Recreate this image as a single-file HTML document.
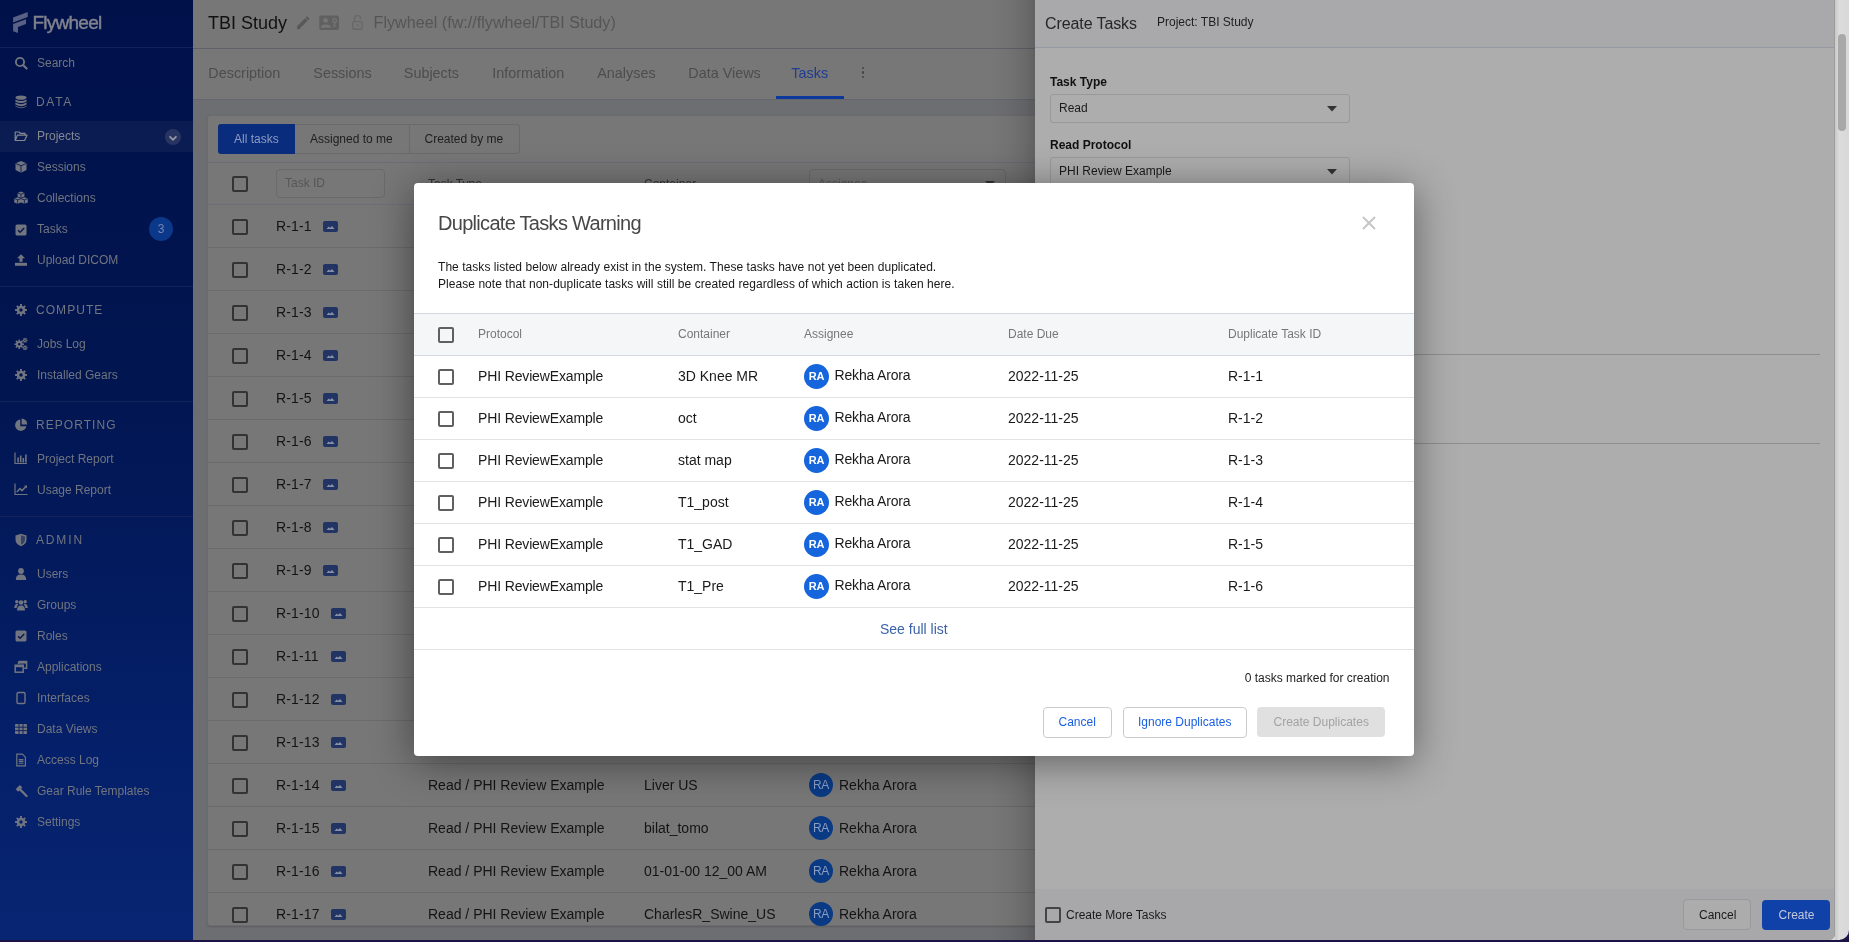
<!DOCTYPE html>
<html><head><meta charset="utf-8"><style>
*{box-sizing:border-box;margin:0;padding:0}
html,body{width:1849px;height:942px;overflow:hidden;background:#1b1346;font-family:"Liberation Sans",sans-serif}
.a{position:absolute}
.t{position:absolute;white-space:nowrap;line-height:1}
body>div{will-change:transform}
</style></head><body>
<div class="a" style="left:0;top:0;width:193px;height:940px;background:linear-gradient(180deg,#00114a 0%,#011550 40%,#05206a 80%,#072572 100%)">
<div class="t" style="left:32.5px;top:13.02px;font-size:19px;color:#81838e;font-weight:400;letter-spacing:-0.75px;-webkit-text-stroke:0.45px #81838e">Flywheel</div>
<svg class="a" style="left:0;top:0" width="40" height="40"><path d="M13.1 17.6L27.7 12.1V17.1L13.1 22.6Z M13.1 24L26 19.3V24L18 27V33L13.1 31.3Z" fill="#586083"/></svg>
<div class="a" style="left:0;top:47px;width:193px;height:1px;background:#12225a"></div>
<div class="a" style="left:0;top:121px;width:193px;height:31px;background:#0b1c52"></div>
<div class="t" style="left:37px;top:56.84px;font-size:12px;color:#71757f;font-weight:400;">Search</div>
<div class="t" style="left:37px;top:129.84px;font-size:12px;color:#858892;font-weight:400;">Projects</div>
<div class="t" style="left:37px;top:160.84px;font-size:12px;color:#71757f;font-weight:400;">Sessions</div>
<div class="t" style="left:37px;top:191.84px;font-size:12px;color:#71757f;font-weight:400;">Collections</div>
<div class="t" style="left:37px;top:222.84px;font-size:12px;color:#71757f;font-weight:400;">Tasks</div>
<div class="t" style="left:37px;top:253.84px;font-size:12px;color:#71757f;font-weight:400;">Upload DICOM</div>
<div class="t" style="left:37px;top:337.84px;font-size:12px;color:#71757f;font-weight:400;">Jobs Log</div>
<div class="t" style="left:37px;top:368.84px;font-size:12px;color:#71757f;font-weight:400;">Installed Gears</div>
<div class="t" style="left:37px;top:452.84px;font-size:12px;color:#71757f;font-weight:400;">Project Report</div>
<div class="t" style="left:37px;top:483.84px;font-size:12px;color:#71757f;font-weight:400;">Usage Report</div>
<div class="t" style="left:37px;top:567.84px;font-size:12px;color:#71757f;font-weight:400;">Users</div>
<div class="t" style="left:37px;top:598.84px;font-size:12px;color:#71757f;font-weight:400;">Groups</div>
<div class="t" style="left:37px;top:629.84px;font-size:12px;color:#71757f;font-weight:400;">Roles</div>
<div class="t" style="left:37px;top:660.84px;font-size:12px;color:#71757f;font-weight:400;">Applications</div>
<div class="t" style="left:37px;top:691.84px;font-size:12px;color:#71757f;font-weight:400;">Interfaces</div>
<div class="t" style="left:37px;top:722.84px;font-size:12px;color:#71757f;font-weight:400;">Data Views</div>
<div class="t" style="left:37px;top:753.84px;font-size:12px;color:#71757f;font-weight:400;">Access Log</div>
<div class="t" style="left:37px;top:784.84px;font-size:12px;color:#71757f;font-weight:400;">Gear Rule Templates</div>
<div class="t" style="left:37px;top:815.84px;font-size:12px;color:#71757f;font-weight:400;">Settings</div>
<div class="t" style="left:36px;top:95.84px;font-size:12px;color:#71757f;font-weight:400;letter-spacing:1.7px">DATA</div>
<div class="t" style="left:36px;top:303.84px;font-size:12px;color:#71757f;font-weight:400;letter-spacing:1.05px">COMPUTE</div>
<div class="t" style="left:36px;top:418.84px;font-size:12px;color:#71757f;font-weight:400;letter-spacing:1.05px">REPORTING</div>
<div class="t" style="left:36px;top:533.84px;font-size:12px;color:#71757f;font-weight:400;letter-spacing:1.85px">ADMIN</div>
<div class="a" style="left:0;top:286px;width:193px;height:1px;background:#12225a"></div>
<div class="a" style="left:0;top:401px;width:193px;height:1px;background:#12225a"></div>
<div class="a" style="left:0;top:516px;width:193px;height:1px;background:#12225a"></div>
<svg class="a" style="left:13.5px;top:55.5px;color:#71757f;" width="14" height="14" viewBox="0 0 14 14"><circle cx="6" cy="6" r="4.1" fill="none" stroke="currentColor" stroke-width="1.9"/><path d="M9 9L12.6 12.6" stroke="currentColor" stroke-width="2.1" stroke-linecap="round"/></svg>
<svg class="a" style="left:13.5px;top:94.5px;color:#71757f;" width="14" height="14" viewBox="0 0 14 14"><ellipse cx="7" cy="2.6" rx="5.6" ry="2.2" fill="currentColor"/><path d="M1.4 4.4Q7 7.6 12.6 4.4V6.4Q7 9.6 1.4 6.4Z M1.4 7.6Q7 10.8 12.6 7.6V9.6Q7 12.8 1.4 9.6Z M1.4 10.8Q7 14 12.6 10.8V11.6Q7 14.8 1.4 11.6Z" fill="currentColor"/></svg>
<svg class="a" style="left:13.5px;top:128.5px;color:#858892;" width="14" height="14" viewBox="0 0 14 14"><path d="M1.2 11.5V3H5L6.3 4.4H11V6.2 M1.2 11.5H10.6L13 6.2H3.4L1.2 11.5Z" fill="none" stroke="currentColor" stroke-width="1.2" stroke-linejoin="round"/></svg>
<svg class="a" style="left:13.5px;top:160px;color:#71757f;" width="14" height="14" viewBox="0 0 14 14"><path d="M7 1L12.5 3.2V10L7 12.8L1.5 10V3.2Z" fill="currentColor"/><path d="M1.5 3.4L7 5.8L12.5 3.4M7 5.8V12.8" fill="none" stroke="#0a1a4e" stroke-width="0.9"/></svg>
<svg class="a" style="left:13.5px;top:190.5px;color:#71757f;" width="14" height="14" viewBox="0 0 14 14"><g fill="currentColor"><path d="M7 0.6L10.4 1.9V5.6L7 7L3.6 5.6V1.9Z"/><path d="M3.6 6.2L7 7.5V11.4L3.6 12.8L0.2 11.4V7.5Z"/><path d="M10.4 6.2L13.8 7.5V11.4L10.4 12.8L7 11.4V7.5Z"/></g><path d="M3.6 2L7 3.3L10.4 2M7 3.3V7M0.2 7.6L3.6 8.9L7 7.6M3.6 8.9V12.8M7 7.6L10.4 8.9L13.8 7.6M10.4 8.9V12.8" fill="none" stroke="#0a1a4e" stroke-width="0.8"/></svg>
<svg class="a" style="left:13.5px;top:222.5px;color:#71757f;" width="14" height="14" viewBox="0 0 14 14"><rect x="1.5" y="1.5" width="11" height="11" rx="1.6" fill="currentColor"/><path d="M4 7.2L6.1 9.2L10.2 5" fill="none" stroke="#0a1a4e" stroke-width="1.5"/></svg>
<svg class="a" style="left:13.5px;top:252.5px;color:#71757f;" width="14" height="14" viewBox="0 0 14 14"><path d="M7 1.2L11 5.2H8.6V8.8H5.4V5.2H3Z" fill="currentColor"/><rect x="1" y="9.8" width="12" height="3" fill="currentColor"/></svg>
<svg class="a" style="left:13.5px;top:302.5px;color:#71757f;" width="14" height="14" viewBox="0 0 14 14"><path d="M11.20 6.08L12.92 6.03L12.92 7.97L11.20 7.92L10.62 9.32L11.87 10.50L10.50 11.87L9.32 10.62L7.92 11.20L7.97 12.92L6.03 12.92L6.08 11.20L4.68 10.62L3.50 11.87L2.13 10.50L3.38 9.32L2.80 7.92L1.08 7.97L1.08 6.03L2.80 6.08L3.38 4.68L2.13 3.50L3.50 2.13L4.68 3.38L6.08 2.80L6.03 1.08L7.97 1.08L7.92 2.80L9.32 3.38L10.50 2.13L11.87 3.50L10.62 4.68ZM8.70 7.00A1.7 1.7 0 1 0 5.30 7.00A1.7 1.7 0 1 0 8.70 7.00Z" fill="currentColor" fill-rule="evenodd"/></svg>
<svg class="a" style="left:13.5px;top:336.5px;color:#71757f;" width="14" height="14" viewBox="0 0 14 14"><path d="M8.52 6.47L9.94 6.43L9.94 7.97L8.52 7.93L8.06 9.03L9.10 10.00L8.00 11.10L7.03 10.06L5.93 10.52L5.97 11.94L4.43 11.94L4.47 10.52L3.37 10.06L2.40 11.10L1.30 10.00L2.34 9.03L1.88 7.93L0.46 7.97L0.46 6.43L1.88 6.47L2.34 5.37L1.30 4.40L2.40 3.30L3.37 4.34L4.47 3.88L4.43 2.46L5.97 2.46L5.93 3.88L7.03 4.34L8.00 3.30L9.10 4.40L8.06 5.37ZM6.50 7.20A1.3 1.3 0 1 0 3.90 7.20A1.3 1.3 0 1 0 6.50 7.20Z" fill="currentColor" fill-rule="evenodd"/><path d="M12.71 2.74L13.53 2.69L13.53 3.91L12.71 3.86L12.34 4.50L12.79 5.19L11.74 5.79L11.37 5.06L10.63 5.06L10.26 5.79L9.21 5.19L9.66 4.50L9.29 3.86L8.47 3.91L8.47 2.69L9.29 2.74L9.66 2.10L9.21 1.41L10.26 0.81L10.63 1.54L11.37 1.54L11.74 0.81L12.79 1.41L12.34 2.10ZM11.70 3.30A0.7 0.7 0 1 0 10.30 3.30A0.7 0.7 0 1 0 11.70 3.30Z" fill="currentColor" fill-rule="evenodd"/><path d="M12.71 10.24L13.53 10.19L13.53 11.41L12.71 11.36L12.34 12.00L12.79 12.69L11.74 13.29L11.37 12.56L10.63 12.56L10.26 13.29L9.21 12.69L9.66 12.00L9.29 11.36L8.47 11.41L8.47 10.19L9.29 10.24L9.66 9.60L9.21 8.91L10.26 8.31L10.63 9.04L11.37 9.04L11.74 8.31L12.79 8.91L12.34 9.60ZM11.70 10.80A0.7 0.7 0 1 0 10.30 10.80A0.7 0.7 0 1 0 11.70 10.80Z" fill="currentColor" fill-rule="evenodd"/></svg>
<svg class="a" style="left:13.5px;top:367.5px;color:#71757f;" width="14" height="14" viewBox="0 0 14 14"><path d="M11.20 6.08L12.92 6.03L12.92 7.97L11.20 7.92L10.62 9.32L11.87 10.50L10.50 11.87L9.32 10.62L7.92 11.20L7.97 12.92L6.03 12.92L6.08 11.20L4.68 10.62L3.50 11.87L2.13 10.50L3.38 9.32L2.80 7.92L1.08 7.97L1.08 6.03L2.80 6.08L3.38 4.68L2.13 3.50L3.50 2.13L4.68 3.38L6.08 2.80L6.03 1.08L7.97 1.08L7.92 2.80L9.32 3.38L10.50 2.13L11.87 3.50L10.62 4.68ZM8.70 7.00A1.7 1.7 0 1 0 5.30 7.00A1.7 1.7 0 1 0 8.70 7.00Z" fill="currentColor" fill-rule="evenodd"/></svg>
<svg class="a" style="left:13.5px;top:417.5px;color:#71757f;" width="14" height="14" viewBox="0 0 14 14"><path d="M6.3 1.5A5.7 5.7 0 1 0 12.4 8.2H6.3Z" fill="currentColor"/><path d="M7.6 0.6A5.7 5.7 0 0 1 13.2 6.4H7.6Z" fill="currentColor"/></svg>
<svg class="a" style="left:13.5px;top:451px;color:#71757f;" width="14" height="14" viewBox="0 0 14 14"><path d="M1 1.5V12.5H13" fill="none" stroke="currentColor" stroke-width="1.2"/><path d="M3.3 6.5h1.6v5h-1.6z M5.9 4.5h1.6v7h-1.6z M8.5 7h1.6v4.5h-1.6z M11.1 3.5h1.6v8h-1.6z" fill="currentColor"/></svg>
<svg class="a" style="left:13.5px;top:482px;color:#71757f;" width="14" height="14" viewBox="0 0 14 14"><path d="M1 1.5V12.5H13.5" fill="none" stroke="currentColor" stroke-width="1.2"/><path d="M2.8 10L6 6.6L8 8.6L12 4.4" fill="none" stroke="currentColor" stroke-width="1.5"/><path d="M10 3.6H13V6.6Z" fill="currentColor"/></svg>
<svg class="a" style="left:13.5px;top:532.5px;color:#71757f;" width="14" height="14" viewBox="0 0 14 14"><path d="M7 0.8L12.5 2.6V6.5Q12.5 11 7 13.2Q1.5 11 1.5 6.5V2.6Z" fill="currentColor"/><path d="M7 2.3L11 3.6V6.6Q11 10 7 11.7Z" fill="#0a1a4e" opacity=".55"/></svg>
<svg class="a" style="left:13.5px;top:566.5px;color:#71757f;" width="14" height="14" viewBox="0 0 14 14"><circle cx="7" cy="4" r="2.9" fill="currentColor"/><path d="M1.8 13Q1.8 7.6 7 7.6Q12.2 7.6 12.2 13Z" fill="currentColor"/></svg>
<svg class="a" style="left:13.5px;top:597.5px;color:#71757f;" width="14" height="14" viewBox="0 0 14 14"><g fill="currentColor"><circle cx="7" cy="4.5" r="2.3"/><circle cx="2.8" cy="3.8" r="1.7"/><circle cx="11.2" cy="3.8" r="1.7"/><path d="M3 12.5Q3 7.4 7 7.4Q11 7.4 11 12.5Z"/><path d="M0.3 10Q0.3 6 3.2 6Q4.3 6 4.4 6.6Q2.8 7.8 2.6 10Z"/><path d="M13.7 10Q13.7 6 10.8 6Q9.7 6 9.6 6.6Q11.2 7.8 11.4 10Z"/></g></svg>
<svg class="a" style="left:13.5px;top:628.5px;color:#71757f;" width="14" height="14" viewBox="0 0 14 14"><rect x="1.5" y="1.5" width="11" height="11" rx="1.6" fill="currentColor"/><path d="M4 7.2L6.1 9.2L10.2 5" fill="none" stroke="#0a1a4e" stroke-width="1.5"/></svg>
<svg class="a" style="left:13.5px;top:659.5px;color:#71757f;" width="14" height="14" viewBox="0 0 14 14"><path d="M4.6 1.6H12.6V8.2H10.2 M4.6 4V1.6" fill="none" stroke="currentColor" stroke-width="1.5"/><rect x="1.2" y="5.2" width="8" height="7" fill="none" stroke="currentColor" stroke-width="1.5"/><rect x="1.2" y="5.2" width="8" height="2" fill="currentColor"/><rect x="4.6" y="1.6" width="8" height="2" fill="currentColor"/></svg>
<svg class="a" style="left:13.5px;top:690.5px;color:#71757f;" width="14" height="14" viewBox="0 0 14 14"><rect x="3" y="1.5" width="8" height="11" rx="1.3" fill="none" stroke="currentColor" stroke-width="1.4"/></svg>
<svg class="a" style="left:13.5px;top:721.5px;color:#71757f;" width="14" height="14" viewBox="0 0 14 14"><rect x="1" y="2" width="12" height="10" rx="1" fill="currentColor"/><path d="M1 5.2H13M1 8.6H13M5 2V12M9 2V12" stroke="#0a1f60" stroke-width="0.9"/></svg>
<svg class="a" style="left:13.5px;top:752.5px;color:#71757f;" width="14" height="14" viewBox="0 0 14 14"><path d="M2.8 1.2H8.4L11.4 4.2V12.8H2.8Z" fill="none" stroke="currentColor" stroke-width="1.2"/><path d="M4.8 6.6H9.4M4.8 8.4H9.4M4.8 10.2H9.4" stroke="currentColor" stroke-width="1.1"/></svg>
<svg class="a" style="left:13.5px;top:783.5px;color:#71757f;" width="14" height="14" viewBox="0 0 14 14"><path d="M1.6 5.2L5.8 1L8.4 3.6L4.2 7.8Z" fill="currentColor"/><path d="M6.2 5.6L12.6 12" stroke="currentColor" stroke-width="2.2" stroke-linecap="round"/></svg>
<svg class="a" style="left:13.5px;top:814.5px;color:#71757f;" width="14" height="14" viewBox="0 0 14 14"><path d="M11.20 6.08L12.92 6.03L12.92 7.97L11.20 7.92L10.62 9.32L11.87 10.50L10.50 11.87L9.32 10.62L7.92 11.20L7.97 12.92L6.03 12.92L6.08 11.20L4.68 10.62L3.50 11.87L2.13 10.50L3.38 9.32L2.80 7.92L1.08 7.97L1.08 6.03L2.80 6.08L3.38 4.68L2.13 3.50L3.50 2.13L4.68 3.38L6.08 2.80L6.03 1.08L7.97 1.08L7.92 2.80L9.32 3.38L10.50 2.13L11.87 3.50L10.62 4.68ZM8.70 7.00A1.7 1.7 0 1 0 5.30 7.00A1.7 1.7 0 1 0 8.70 7.00Z" fill="currentColor" fill-rule="evenodd"/></svg>
<div class="a" style="left:165px;top:129px;width:16px;height:16px;border-radius:50%;background:#283461"></div>
<svg class="a" style="left:166px;top:130.5px;color:#989aa3;" width="14" height="14" viewBox="0 0 14 14"><path d="M3.6 5.4L7 8.8L10.4 5.4" fill="none" stroke="currentColor" stroke-width="1.8"/></svg>
<div class="a" style="left:149px;top:217px;width:24px;height:24px;border-radius:50%;background:#0b388a;color:#7385b3;font-size:12px;line-height:24px;text-align:center">3</div>
</div>
<div class="a" style="left:193px;top:0;width:842px;height:940px;background:#6d6e71;overflow:hidden">
<div class="a" style="left:0;top:0;width:842px;height:100px;background:#777777"></div>
<div class="a" style="left:0;top:48px;width:842px;height:1px;background:#5f6269"></div>
<div class="a" style="left:0;top:99px;width:842px;height:1px;background:#63666d"></div>
<div class="t" style="left:15px;top:13.96px;font-size:18px;color:#111;font-weight:400;">TBI Study</div>
<div class="t" style="left:180.60000000000002px;top:14.33px;font-size:16.15px;color:#555;font-weight:400;">Flywheel (fw://flywheel/TBI Study)</div>
<svg class="a" style="left:97px;top:10px" width="80" height="26" viewBox="290 10 80 26"><path d="M298.2 27.6L306.4 19.4" stroke="#595959" stroke-width="3.6"/><path d="M306.9 18.9L308.3 17.5" stroke="#595959" stroke-width="3.6"/><path d="M297 29.2L297.3 25.6L300.6 28.9Z" fill="#595959"/><rect x="319.3" y="15.6" width="19.7" height="14.5" rx="2" fill="#606060"/><circle cx="325.6" cy="20.4" r="2.4" fill="#757575"/><path d="M320.8 27.8Q321 24.6 325.8 24.6Q330.8 24.6 331 27.8Z" fill="#757575"/><circle cx="334.7" cy="20.6" r="1.9" fill="none" stroke="#757575" stroke-width="1.3"/><path d="M334.7 22.4V27.2M334.7 25H333.4M334.7 26.6H333.6" stroke="#757575" stroke-width="1.2"/><rect x="352.8" y="21.6" width="9.4" height="7.6" rx="1.2" fill="none" stroke="#686868" stroke-width="1.4"/><path d="M354.6 21V18.4Q354.6 15.6 357.6 15.6Q360.6 15.6 360.6 18.4V19.4" fill="none" stroke="#686868" stroke-width="1.4"/><circle cx="357.5" cy="25.2" r="1" fill="#686868"/></svg>
<div class="a" style="left:668.8px;top:66.9px;width:2.6px;height:2.6px;border-radius:50%;background:#444"></div>
<div class="a" style="left:668.8px;top:71.2px;width:2.6px;height:2.6px;border-radius:50%;background:#444"></div>
<div class="a" style="left:668.8px;top:75.5px;width:2.6px;height:2.6px;border-radius:50%;background:#444"></div>
<div class="t" style="left:15.300000000000011px;top:65.81px;font-size:14.4px;color:#4d4d4d;font-weight:400;">Description</div>
<div class="t" style="left:120.30000000000001px;top:65.81px;font-size:14.4px;color:#4d4d4d;font-weight:400;">Sessions</div>
<div class="t" style="left:210.8px;top:65.81px;font-size:14.4px;color:#4d4d4d;font-weight:400;">Subjects</div>
<div class="t" style="left:299.2px;top:65.81px;font-size:14.4px;color:#4d4d4d;font-weight:400;">Information</div>
<div class="t" style="left:404.20000000000005px;top:65.81px;font-size:14.4px;color:#4d4d4d;font-weight:400;">Analyses</div>
<div class="t" style="left:495.29999999999995px;top:65.81px;font-size:14.4px;color:#4d4d4d;font-weight:400;">Data Views</div>
<div class="t" style="left:598.3px;top:65.81px;font-size:14.4px;color:#1f3d92;font-weight:400;">Tasks</div>
<div class="a" style="left:583px;top:96px;width:68px;height:3px;background:#0c389b"></div>
<div class="a" style="left:14px;top:115px;width:900px;height:811px;background:#777;border:1px solid #6c6c6c;border-radius:3px;box-shadow:0 1px 2px rgba(0,0,0,.15);overflow:hidden"></div>
<div class="a" style="left:25px;top:124px;width:302px;height:30px;border:1px solid #6a6a6a;border-radius:3px;background:#777"></div>
<div class="a" style="left:25px;top:124px;width:77px;height:30px;border-radius:3px 0 0 3px;background:#0a2c7c"></div>
<div class="a" style="left:216px;top:124px;width:1px;height:30px;background:#6a6a6a"></div>
<div class="t" style="left:41px;top:133.04px;font-size:12px;color:#8c9cc3;font-weight:400;">All tasks</div>
<div class="t" style="left:117px;top:133.04px;font-size:12px;color:#1e1e1e;font-weight:400;">Assigned to me</div>
<div class="t" style="left:231.5px;top:133.04px;font-size:12px;color:#1e1e1e;font-weight:400;">Created by me</div>
<div class="a" style="left:15px;top:162px;width:900px;height:1px;background:#6b6e78"></div>
<div class="a" style="left:83px;top:169px;width:109px;height:29px;border:1px solid #6a6a6a;border-radius:4px"></div>
<div class="t" style="left:92px;top:177.34px;font-size:12px;color:#575757;font-weight:400;">Task ID</div>
<div class="t" style="left:235px;top:177.84px;font-size:12px;color:#333;font-weight:400;">Task Type</div>
<div class="t" style="left:451px;top:177.84px;font-size:12px;color:#333;font-weight:400;">Container</div>
<div class="a" style="left:616px;top:169px;width:197px;height:29px;border:1px solid #6a6a6a;border-radius:4px"></div>
<div class="t" style="left:625px;top:177.84px;font-size:12px;color:#555;font-weight:400;">Assignee</div>
<svg class="a" style="left:792px;top:181px" width="10" height="6"><path d="M0 0H10L5 5Z" fill="#333"/></svg>
<div class="a" style="left:39px;top:176px;width:16px;height:16px;border:2px solid #333;border-radius:2px"></div>
<div class="a" style="left:15px;top:204px;width:900px;height:1px;background:#6b6e78"></div>
<div class="a" style="left:0;top:0;width:842px;height:926px;overflow:hidden">
<div class="a" style="left:15px;top:247px;width:900px;height:1px;background:#6b6b6b"></div>
<div class="a" style="left:39px;top:219px;width:16px;height:16px;border:2px solid #333;border-radius:2px"></div>
<div class="t" style="left:83px;top:219.15px;font-size:14px;color:#141414;font-weight:400;letter-spacing:0.15px">R-1-1</div>
<svg class="a" style="left:129.5px;top:220.5px" width="15" height="11"><rect width="15" height="11" rx="2" fill="#223463"/><path d="M3.5 8L5.8 5.6L7.2 6.8L9 5L11.5 8Z" fill="#8791a6"/></svg>
<div class="t" style="left:235px;top:219.15px;font-size:14px;color:#141414;font-weight:400;">Read / PHI Review Example</div>
<div class="t" style="left:451px;top:219.15px;font-size:14px;color:#141414;font-weight:400;">3D Knee MR</div>
<div class="a" style="left:616px;top:214px;width:24px;height:24px;border-radius:50%;background:#0a3a84;color:#8a9cc0;font-size:12px;font-weight:400;line-height:24px;text-align:center;letter-spacing:-0.3px">RA</div>
<div class="t" style="left:646px;top:219.15px;font-size:14px;color:#141414;font-weight:400;">Rekha Arora</div>
<div class="a" style="left:15px;top:290px;width:900px;height:1px;background:#6b6b6b"></div>
<div class="a" style="left:39px;top:262px;width:16px;height:16px;border:2px solid #333;border-radius:2px"></div>
<div class="t" style="left:83px;top:262.15px;font-size:14px;color:#141414;font-weight:400;letter-spacing:0.15px">R-1-2</div>
<svg class="a" style="left:129.5px;top:263.5px" width="15" height="11"><rect width="15" height="11" rx="2" fill="#223463"/><path d="M3.5 8L5.8 5.6L7.2 6.8L9 5L11.5 8Z" fill="#8791a6"/></svg>
<div class="t" style="left:235px;top:262.15px;font-size:14px;color:#141414;font-weight:400;">Read / PHI Review Example</div>
<div class="t" style="left:451px;top:262.15px;font-size:14px;color:#141414;font-weight:400;">oct</div>
<div class="a" style="left:616px;top:257px;width:24px;height:24px;border-radius:50%;background:#0a3a84;color:#8a9cc0;font-size:12px;font-weight:400;line-height:24px;text-align:center;letter-spacing:-0.3px">RA</div>
<div class="t" style="left:646px;top:262.15px;font-size:14px;color:#141414;font-weight:400;">Rekha Arora</div>
<div class="a" style="left:15px;top:333px;width:900px;height:1px;background:#6b6b6b"></div>
<div class="a" style="left:39px;top:305px;width:16px;height:16px;border:2px solid #333;border-radius:2px"></div>
<div class="t" style="left:83px;top:305.15px;font-size:14px;color:#141414;font-weight:400;letter-spacing:0.15px">R-1-3</div>
<svg class="a" style="left:129.5px;top:306.5px" width="15" height="11"><rect width="15" height="11" rx="2" fill="#223463"/><path d="M3.5 8L5.8 5.6L7.2 6.8L9 5L11.5 8Z" fill="#8791a6"/></svg>
<div class="t" style="left:235px;top:305.15px;font-size:14px;color:#141414;font-weight:400;">Read / PHI Review Example</div>
<div class="t" style="left:451px;top:305.15px;font-size:14px;color:#141414;font-weight:400;">stat map</div>
<div class="a" style="left:616px;top:300px;width:24px;height:24px;border-radius:50%;background:#0a3a84;color:#8a9cc0;font-size:12px;font-weight:400;line-height:24px;text-align:center;letter-spacing:-0.3px">RA</div>
<div class="t" style="left:646px;top:305.15px;font-size:14px;color:#141414;font-weight:400;">Rekha Arora</div>
<div class="a" style="left:15px;top:376px;width:900px;height:1px;background:#6b6b6b"></div>
<div class="a" style="left:39px;top:348px;width:16px;height:16px;border:2px solid #333;border-radius:2px"></div>
<div class="t" style="left:83px;top:348.15px;font-size:14px;color:#141414;font-weight:400;letter-spacing:0.15px">R-1-4</div>
<svg class="a" style="left:129.5px;top:349.5px" width="15" height="11"><rect width="15" height="11" rx="2" fill="#223463"/><path d="M3.5 8L5.8 5.6L7.2 6.8L9 5L11.5 8Z" fill="#8791a6"/></svg>
<div class="t" style="left:235px;top:348.15px;font-size:14px;color:#141414;font-weight:400;">Read / PHI Review Example</div>
<div class="t" style="left:451px;top:348.15px;font-size:14px;color:#141414;font-weight:400;">T1_post</div>
<div class="a" style="left:616px;top:343px;width:24px;height:24px;border-radius:50%;background:#0a3a84;color:#8a9cc0;font-size:12px;font-weight:400;line-height:24px;text-align:center;letter-spacing:-0.3px">RA</div>
<div class="t" style="left:646px;top:348.15px;font-size:14px;color:#141414;font-weight:400;">Rekha Arora</div>
<div class="a" style="left:15px;top:419px;width:900px;height:1px;background:#6b6b6b"></div>
<div class="a" style="left:39px;top:391px;width:16px;height:16px;border:2px solid #333;border-radius:2px"></div>
<div class="t" style="left:83px;top:391.15px;font-size:14px;color:#141414;font-weight:400;letter-spacing:0.15px">R-1-5</div>
<svg class="a" style="left:129.5px;top:392.5px" width="15" height="11"><rect width="15" height="11" rx="2" fill="#223463"/><path d="M3.5 8L5.8 5.6L7.2 6.8L9 5L11.5 8Z" fill="#8791a6"/></svg>
<div class="t" style="left:235px;top:391.15px;font-size:14px;color:#141414;font-weight:400;">Read / PHI Review Example</div>
<div class="t" style="left:451px;top:391.15px;font-size:14px;color:#141414;font-weight:400;">T1_GAD</div>
<div class="a" style="left:616px;top:386px;width:24px;height:24px;border-radius:50%;background:#0a3a84;color:#8a9cc0;font-size:12px;font-weight:400;line-height:24px;text-align:center;letter-spacing:-0.3px">RA</div>
<div class="t" style="left:646px;top:391.15px;font-size:14px;color:#141414;font-weight:400;">Rekha Arora</div>
<div class="a" style="left:15px;top:462px;width:900px;height:1px;background:#6b6b6b"></div>
<div class="a" style="left:39px;top:434px;width:16px;height:16px;border:2px solid #333;border-radius:2px"></div>
<div class="t" style="left:83px;top:434.15px;font-size:14px;color:#141414;font-weight:400;letter-spacing:0.15px">R-1-6</div>
<svg class="a" style="left:129.5px;top:435.5px" width="15" height="11"><rect width="15" height="11" rx="2" fill="#223463"/><path d="M3.5 8L5.8 5.6L7.2 6.8L9 5L11.5 8Z" fill="#8791a6"/></svg>
<div class="t" style="left:235px;top:434.15px;font-size:14px;color:#141414;font-weight:400;">Read / PHI Review Example</div>
<div class="t" style="left:451px;top:434.15px;font-size:14px;color:#141414;font-weight:400;">T1_Pre</div>
<div class="a" style="left:616px;top:429px;width:24px;height:24px;border-radius:50%;background:#0a3a84;color:#8a9cc0;font-size:12px;font-weight:400;line-height:24px;text-align:center;letter-spacing:-0.3px">RA</div>
<div class="t" style="left:646px;top:434.15px;font-size:14px;color:#141414;font-weight:400;">Rekha Arora</div>
<div class="a" style="left:15px;top:505px;width:900px;height:1px;background:#6b6b6b"></div>
<div class="a" style="left:39px;top:477px;width:16px;height:16px;border:2px solid #333;border-radius:2px"></div>
<div class="t" style="left:83px;top:477.15px;font-size:14px;color:#141414;font-weight:400;letter-spacing:0.15px">R-1-7</div>
<svg class="a" style="left:129.5px;top:478.5px" width="15" height="11"><rect width="15" height="11" rx="2" fill="#223463"/><path d="M3.5 8L5.8 5.6L7.2 6.8L9 5L11.5 8Z" fill="#8791a6"/></svg>
<div class="t" style="left:235px;top:477.15px;font-size:14px;color:#141414;font-weight:400;">Read / PHI Review Example</div>
<div class="t" style="left:451px;top:477.15px;font-size:14px;color:#141414;font-weight:400;">x</div>
<div class="a" style="left:616px;top:472px;width:24px;height:24px;border-radius:50%;background:#0a3a84;color:#8a9cc0;font-size:12px;font-weight:400;line-height:24px;text-align:center;letter-spacing:-0.3px">RA</div>
<div class="t" style="left:646px;top:477.15px;font-size:14px;color:#141414;font-weight:400;">Rekha Arora</div>
<div class="a" style="left:15px;top:548px;width:900px;height:1px;background:#6b6b6b"></div>
<div class="a" style="left:39px;top:520px;width:16px;height:16px;border:2px solid #333;border-radius:2px"></div>
<div class="t" style="left:83px;top:520.15px;font-size:14px;color:#141414;font-weight:400;letter-spacing:0.15px">R-1-8</div>
<svg class="a" style="left:129.5px;top:521.5px" width="15" height="11"><rect width="15" height="11" rx="2" fill="#223463"/><path d="M3.5 8L5.8 5.6L7.2 6.8L9 5L11.5 8Z" fill="#8791a6"/></svg>
<div class="t" style="left:235px;top:520.15px;font-size:14px;color:#141414;font-weight:400;">Read / PHI Review Example</div>
<div class="t" style="left:451px;top:520.15px;font-size:14px;color:#141414;font-weight:400;">x</div>
<div class="a" style="left:616px;top:515px;width:24px;height:24px;border-radius:50%;background:#0a3a84;color:#8a9cc0;font-size:12px;font-weight:400;line-height:24px;text-align:center;letter-spacing:-0.3px">RA</div>
<div class="t" style="left:646px;top:520.15px;font-size:14px;color:#141414;font-weight:400;">Rekha Arora</div>
<div class="a" style="left:15px;top:591px;width:900px;height:1px;background:#6b6b6b"></div>
<div class="a" style="left:39px;top:563px;width:16px;height:16px;border:2px solid #333;border-radius:2px"></div>
<div class="t" style="left:83px;top:563.15px;font-size:14px;color:#141414;font-weight:400;letter-spacing:0.15px">R-1-9</div>
<svg class="a" style="left:129.5px;top:564.5px" width="15" height="11"><rect width="15" height="11" rx="2" fill="#223463"/><path d="M3.5 8L5.8 5.6L7.2 6.8L9 5L11.5 8Z" fill="#8791a6"/></svg>
<div class="t" style="left:235px;top:563.15px;font-size:14px;color:#141414;font-weight:400;">Read / PHI Review Example</div>
<div class="t" style="left:451px;top:563.15px;font-size:14px;color:#141414;font-weight:400;">x</div>
<div class="a" style="left:616px;top:558px;width:24px;height:24px;border-radius:50%;background:#0a3a84;color:#8a9cc0;font-size:12px;font-weight:400;line-height:24px;text-align:center;letter-spacing:-0.3px">RA</div>
<div class="t" style="left:646px;top:563.15px;font-size:14px;color:#141414;font-weight:400;">Rekha Arora</div>
<div class="a" style="left:15px;top:634px;width:900px;height:1px;background:#6b6b6b"></div>
<div class="a" style="left:39px;top:606px;width:16px;height:16px;border:2px solid #333;border-radius:2px"></div>
<div class="t" style="left:83px;top:606.15px;font-size:14px;color:#141414;font-weight:400;letter-spacing:0.15px">R-1-10</div>
<svg class="a" style="left:137.8px;top:607.5px" width="15" height="11"><rect width="15" height="11" rx="2" fill="#223463"/><path d="M3.5 8L5.8 5.6L7.2 6.8L9 5L11.5 8Z" fill="#8791a6"/></svg>
<div class="t" style="left:235px;top:606.15px;font-size:14px;color:#141414;font-weight:400;">Read / PHI Review Example</div>
<div class="t" style="left:451px;top:606.15px;font-size:14px;color:#141414;font-weight:400;">x</div>
<div class="a" style="left:616px;top:601px;width:24px;height:24px;border-radius:50%;background:#0a3a84;color:#8a9cc0;font-size:12px;font-weight:400;line-height:24px;text-align:center;letter-spacing:-0.3px">RA</div>
<div class="t" style="left:646px;top:606.15px;font-size:14px;color:#141414;font-weight:400;">Rekha Arora</div>
<div class="a" style="left:15px;top:677px;width:900px;height:1px;background:#6b6b6b"></div>
<div class="a" style="left:39px;top:649px;width:16px;height:16px;border:2px solid #333;border-radius:2px"></div>
<div class="t" style="left:83px;top:649.15px;font-size:14px;color:#141414;font-weight:400;letter-spacing:0.15px">R-1-11</div>
<svg class="a" style="left:137.8px;top:650.5px" width="15" height="11"><rect width="15" height="11" rx="2" fill="#223463"/><path d="M3.5 8L5.8 5.6L7.2 6.8L9 5L11.5 8Z" fill="#8791a6"/></svg>
<div class="t" style="left:235px;top:649.15px;font-size:14px;color:#141414;font-weight:400;">Read / PHI Review Example</div>
<div class="t" style="left:451px;top:649.15px;font-size:14px;color:#141414;font-weight:400;">x</div>
<div class="a" style="left:616px;top:644px;width:24px;height:24px;border-radius:50%;background:#0a3a84;color:#8a9cc0;font-size:12px;font-weight:400;line-height:24px;text-align:center;letter-spacing:-0.3px">RA</div>
<div class="t" style="left:646px;top:649.15px;font-size:14px;color:#141414;font-weight:400;">Rekha Arora</div>
<div class="a" style="left:15px;top:720px;width:900px;height:1px;background:#6b6b6b"></div>
<div class="a" style="left:39px;top:692px;width:16px;height:16px;border:2px solid #333;border-radius:2px"></div>
<div class="t" style="left:83px;top:692.15px;font-size:14px;color:#141414;font-weight:400;letter-spacing:0.15px">R-1-12</div>
<svg class="a" style="left:137.8px;top:693.5px" width="15" height="11"><rect width="15" height="11" rx="2" fill="#223463"/><path d="M3.5 8L5.8 5.6L7.2 6.8L9 5L11.5 8Z" fill="#8791a6"/></svg>
<div class="t" style="left:235px;top:692.15px;font-size:14px;color:#141414;font-weight:400;">Read / PHI Review Example</div>
<div class="t" style="left:451px;top:692.15px;font-size:14px;color:#141414;font-weight:400;">x</div>
<div class="a" style="left:616px;top:687px;width:24px;height:24px;border-radius:50%;background:#0a3a84;color:#8a9cc0;font-size:12px;font-weight:400;line-height:24px;text-align:center;letter-spacing:-0.3px">RA</div>
<div class="t" style="left:646px;top:692.15px;font-size:14px;color:#141414;font-weight:400;">Rekha Arora</div>
<div class="a" style="left:15px;top:763px;width:900px;height:1px;background:#6b6b6b"></div>
<div class="a" style="left:39px;top:735px;width:16px;height:16px;border:2px solid #333;border-radius:2px"></div>
<div class="t" style="left:83px;top:735.15px;font-size:14px;color:#141414;font-weight:400;letter-spacing:0.15px">R-1-13</div>
<svg class="a" style="left:137.8px;top:736.5px" width="15" height="11"><rect width="15" height="11" rx="2" fill="#223463"/><path d="M3.5 8L5.8 5.6L7.2 6.8L9 5L11.5 8Z" fill="#8791a6"/></svg>
<div class="t" style="left:235px;top:735.15px;font-size:14px;color:#141414;font-weight:400;">Read / PHI Review Example</div>
<div class="t" style="left:451px;top:735.15px;font-size:14px;color:#141414;font-weight:400;">x</div>
<div class="a" style="left:616px;top:730px;width:24px;height:24px;border-radius:50%;background:#0a3a84;color:#8a9cc0;font-size:12px;font-weight:400;line-height:24px;text-align:center;letter-spacing:-0.3px">RA</div>
<div class="t" style="left:646px;top:735.15px;font-size:14px;color:#141414;font-weight:400;">Rekha Arora</div>
<div class="a" style="left:15px;top:806px;width:900px;height:1px;background:#6b6b6b"></div>
<div class="a" style="left:39px;top:778px;width:16px;height:16px;border:2px solid #333;border-radius:2px"></div>
<div class="t" style="left:83px;top:778.15px;font-size:14px;color:#141414;font-weight:400;letter-spacing:0.15px">R-1-14</div>
<svg class="a" style="left:137.8px;top:779.5px" width="15" height="11"><rect width="15" height="11" rx="2" fill="#223463"/><path d="M3.5 8L5.8 5.6L7.2 6.8L9 5L11.5 8Z" fill="#8791a6"/></svg>
<div class="t" style="left:235px;top:778.15px;font-size:14px;color:#141414;font-weight:400;">Read / PHI Review Example</div>
<div class="t" style="left:451px;top:778.15px;font-size:14px;color:#141414;font-weight:400;">Liver US</div>
<div class="a" style="left:616px;top:773px;width:24px;height:24px;border-radius:50%;background:#0a3a84;color:#8a9cc0;font-size:12px;font-weight:400;line-height:24px;text-align:center;letter-spacing:-0.3px">RA</div>
<div class="t" style="left:646px;top:778.15px;font-size:14px;color:#141414;font-weight:400;">Rekha Arora</div>
<div class="a" style="left:15px;top:849px;width:900px;height:1px;background:#6b6b6b"></div>
<div class="a" style="left:39px;top:821px;width:16px;height:16px;border:2px solid #333;border-radius:2px"></div>
<div class="t" style="left:83px;top:821.15px;font-size:14px;color:#141414;font-weight:400;letter-spacing:0.15px">R-1-15</div>
<svg class="a" style="left:137.8px;top:822.5px" width="15" height="11"><rect width="15" height="11" rx="2" fill="#223463"/><path d="M3.5 8L5.8 5.6L7.2 6.8L9 5L11.5 8Z" fill="#8791a6"/></svg>
<div class="t" style="left:235px;top:821.15px;font-size:14px;color:#141414;font-weight:400;">Read / PHI Review Example</div>
<div class="t" style="left:451px;top:821.15px;font-size:14px;color:#141414;font-weight:400;">bilat_tomo</div>
<div class="a" style="left:616px;top:816px;width:24px;height:24px;border-radius:50%;background:#0a3a84;color:#8a9cc0;font-size:12px;font-weight:400;line-height:24px;text-align:center;letter-spacing:-0.3px">RA</div>
<div class="t" style="left:646px;top:821.15px;font-size:14px;color:#141414;font-weight:400;">Rekha Arora</div>
<div class="a" style="left:15px;top:892px;width:900px;height:1px;background:#6b6b6b"></div>
<div class="a" style="left:39px;top:864px;width:16px;height:16px;border:2px solid #333;border-radius:2px"></div>
<div class="t" style="left:83px;top:864.15px;font-size:14px;color:#141414;font-weight:400;letter-spacing:0.15px">R-1-16</div>
<svg class="a" style="left:137.8px;top:865.5px" width="15" height="11"><rect width="15" height="11" rx="2" fill="#223463"/><path d="M3.5 8L5.8 5.6L7.2 6.8L9 5L11.5 8Z" fill="#8791a6"/></svg>
<div class="t" style="left:235px;top:864.15px;font-size:14px;color:#141414;font-weight:400;">Read / PHI Review Example</div>
<div class="t" style="left:451px;top:864.15px;font-size:14px;color:#141414;font-weight:400;">01-01-00 12_00 AM</div>
<div class="a" style="left:616px;top:859px;width:24px;height:24px;border-radius:50%;background:#0a3a84;color:#8a9cc0;font-size:12px;font-weight:400;line-height:24px;text-align:center;letter-spacing:-0.3px">RA</div>
<div class="t" style="left:646px;top:864.15px;font-size:14px;color:#141414;font-weight:400;">Rekha Arora</div>
<div class="a" style="left:39px;top:907px;width:16px;height:16px;border:2px solid #333;border-radius:2px"></div>
<div class="t" style="left:83px;top:907.15px;font-size:14px;color:#141414;font-weight:400;letter-spacing:0.15px">R-1-17</div>
<svg class="a" style="left:137.8px;top:908.5px" width="15" height="11"><rect width="15" height="11" rx="2" fill="#223463"/><path d="M3.5 8L5.8 5.6L7.2 6.8L9 5L11.5 8Z" fill="#8791a6"/></svg>
<div class="t" style="left:235px;top:907.15px;font-size:14px;color:#141414;font-weight:400;">Read / PHI Review Example</div>
<div class="t" style="left:451px;top:907.15px;font-size:14px;color:#141414;font-weight:400;">CharlesR_Swine_US</div>
<div class="a" style="left:616px;top:902px;width:24px;height:24px;border-radius:50%;background:#0a3a84;color:#8a9cc0;font-size:12px;font-weight:400;line-height:24px;text-align:center;letter-spacing:-0.3px">RA</div>
<div class="t" style="left:646px;top:907.15px;font-size:14px;color:#141414;font-weight:400;">Rekha Arora</div>
</div>
<div class="a" style="left:797px;top:0;width:45px;height:940px;background:linear-gradient(90deg,rgba(0,0,0,0) 0,rgba(0,0,0,.04) 40%,rgba(0,0,0,.10) 75%,rgba(0,0,0,.19) 100%)"></div>
</div>
<div class="a" style="left:1815px;top:900px;width:25px;height:40px;background:#d9d9d9"></div>
<div class="a" style="left:1035px;top:0;width:800px;height:940px;background:#adadad;overflow:hidden;border-bottom-right-radius:6px">
<div class="a" style="left:0;top:0;width:800px;height:47px;background:#a9a9ab"></div>
<div class="a" style="left:0;top:47px;width:800px;height:1px;background:#9499a3"></div>
<div class="t" style="left:10px;top:15.66px;font-size:16px;color:#262626;font-weight:400;letter-spacing:-0.1px">Create Tasks</div>
<div class="t" style="left:122px;top:16.04px;font-size:12px;color:#1e1e1e;font-weight:400;">Project: TBI Study</div>
<div class="t" style="left:15px;top:76.14px;font-size:12px;color:#111;font-weight:700;">Task Type</div>
<div class="a" style="left:15px;top:94px;width:300px;height:29px;border:1px solid #999;border-radius:3px"></div>
<div class="t" style="left:24px;top:101.84px;font-size:12px;color:#1a1a1a;font-weight:400;">Read</div>
<div class="t" style="left:15px;top:139.04px;font-size:12px;color:#111;font-weight:700;">Read Protocol</div>
<div class="a" style="left:15px;top:157px;width:300px;height:29px;border:1px solid #999;border-radius:3px"></div>
<div class="t" style="left:24px;top:164.84px;font-size:12px;color:#1a1a1a;font-weight:400;">PHI Review Example</div>
<svg class="a" style="left:292px;top:106px" width="10" height="6"><path d="M0 0H10L5 5.5Z" fill="#333"/></svg>
<svg class="a" style="left:292px;top:169px" width="10" height="6"><path d="M0 0H10L5 5.5Z" fill="#333"/></svg>
<div class="a" style="left:15px;top:354px;width:770px;height:1px;background:#8e8e8e"></div>
<div class="a" style="left:15px;top:443px;width:770px;height:1px;background:#8e8e8e"></div>
<div class="a" style="left:0;top:889px;width:800px;height:51px;background:#a8a8aa"></div>
<div class="a" style="left:10px;top:907px;width:16px;height:16px;border:2px solid #444;border-radius:2px"></div>
<div class="t" style="left:31px;top:908.84px;font-size:12px;color:#1a1a1a;font-weight:400;">Create More Tasks</div>
<div class="a" style="left:799px;top:0;width:1px;height:940px;background:#9d9d9d"></div>
<div class="a" style="left:648px;top:899px;width:68px;height:31px;border:1px solid #999;border-radius:4px;background:#acacac"></div>
<div class="t" style="left:664px;top:908.64px;font-size:12px;color:#1a1a1a;font-weight:400;">Cancel</div>
<div class="a" style="left:727px;top:900px;width:68px;height:30px;border-radius:4px;background:#1041a8"></div>
<div class="t" style="left:743.5px;top:908.64px;font-size:12px;color:#c2c8da;font-weight:400;">Create</div>
</div>
<div class="a" style="left:1835px;top:0;width:14px;height:940px;background:linear-gradient(90deg,#c8c8c8 0,#dcdcdc 30%,#d8d8d8 100%);border-bottom-right-radius:10px"></div>
<div class="a" style="left:1838px;top:34px;width:8px;height:97px;background:#a8a8a8;border-radius:4px"></div>
<div class="a" style="left:414px;top:183px;width:1000px;height:573px;background:#fff;border-radius:4px;box-shadow:0 6px 40px rgba(0,0,0,.45)">
<div class="t" style="left:24px;top:30.07px;font-size:20px;color:#474747;font-weight:400;letter-spacing:-0.7px">Duplicate Tasks Warning</div>
<svg class="a" style="left:948px;top:32.5px" width="14" height="14"><path d="M1 1L13 13M13 1L1 13" stroke="#c6c6c6" stroke-width="2"/></svg>
<div class="t" style="left:24px;top:77.94px;font-size:12px;color:#181818;font-weight:400;letter-spacing:0.045px">The tasks listed below already exist in the system. These tasks have not yet been duplicated.</div>
<div class="t" style="left:24px;top:94.94px;font-size:12px;color:#181818;font-weight:400;letter-spacing:0.05px">Please note that non-duplicate tasks will still be created regardless of which action is taken here.</div>
<div class="a" style="left:0px;top:130px;width:1000px;height:43px;background:#f5f6f8;border-top:1px solid #d3d9e4;border-bottom:1px solid #d3d9e4"></div>
<div class="a" style="left:24px;top:144px;width:16px;height:16px;border:2px solid #606060;border-radius:2px"></div>
<div class="t" style="left:64px;top:144.94px;font-size:12px;color:#777;font-weight:400;">Protocol</div>
<div class="t" style="left:264px;top:144.94px;font-size:12px;color:#777;font-weight:400;">Container</div>
<div class="t" style="left:390px;top:144.94px;font-size:12px;color:#777;font-weight:400;">Assignee</div>
<div class="t" style="left:594px;top:144.94px;font-size:12px;color:#777;font-weight:400;">Date Due</div>
<div class="t" style="left:814px;top:144.94px;font-size:12px;color:#777;font-weight:400;">Duplicate Task ID</div>
<div class="a" style="left:24px;top:186px;width:16px;height:16px;border:2px solid #606060;border-radius:2px"></div>
<div class="t" style="left:64px;top:186.15px;font-size:14px;color:#1a1a1a;font-weight:400;letter-spacing:-0.14px">PHI ReviewExample</div>
<div class="t" style="left:264px;top:186.15px;font-size:14px;color:#1a1a1a;font-weight:400;">3D Knee MR</div>
<div class="a" style="left:390px;top:181px;width:25px;height:25px;border-radius:50%;background:#1565dc;color:#fff;font-size:11px;font-weight:700;line-height:25px;text-align:center;letter-spacing:-0.2px">RA</div>
<div class="t" style="left:420.5px;top:185.15px;font-size:14px;color:#1a1a1a;font-weight:400;letter-spacing:-0.17px">Rekha Arora</div>
<div class="t" style="left:594px;top:186.15px;font-size:14px;color:#1a1a1a;font-weight:400;">2022-11-25</div>
<div class="t" style="left:814px;top:186.15px;font-size:14px;color:#1a1a1a;font-weight:400;">R-1-1</div>
<div class="a" style="left:0px;top:214px;width:1000px;height:1px;background:#e3e3e3"></div>
<div class="a" style="left:24px;top:228px;width:16px;height:16px;border:2px solid #606060;border-radius:2px"></div>
<div class="t" style="left:64px;top:228.15px;font-size:14px;color:#1a1a1a;font-weight:400;letter-spacing:-0.14px">PHI ReviewExample</div>
<div class="t" style="left:264px;top:228.15px;font-size:14px;color:#1a1a1a;font-weight:400;">oct</div>
<div class="a" style="left:390px;top:223px;width:25px;height:25px;border-radius:50%;background:#1565dc;color:#fff;font-size:11px;font-weight:700;line-height:25px;text-align:center;letter-spacing:-0.2px">RA</div>
<div class="t" style="left:420.5px;top:227.15px;font-size:14px;color:#1a1a1a;font-weight:400;letter-spacing:-0.17px">Rekha Arora</div>
<div class="t" style="left:594px;top:228.15px;font-size:14px;color:#1a1a1a;font-weight:400;">2022-11-25</div>
<div class="t" style="left:814px;top:228.15px;font-size:14px;color:#1a1a1a;font-weight:400;">R-1-2</div>
<div class="a" style="left:0px;top:256px;width:1000px;height:1px;background:#e3e3e3"></div>
<div class="a" style="left:24px;top:270px;width:16px;height:16px;border:2px solid #606060;border-radius:2px"></div>
<div class="t" style="left:64px;top:270.15px;font-size:14px;color:#1a1a1a;font-weight:400;letter-spacing:-0.14px">PHI ReviewExample</div>
<div class="t" style="left:264px;top:270.15px;font-size:14px;color:#1a1a1a;font-weight:400;">stat map</div>
<div class="a" style="left:390px;top:265px;width:25px;height:25px;border-radius:50%;background:#1565dc;color:#fff;font-size:11px;font-weight:700;line-height:25px;text-align:center;letter-spacing:-0.2px">RA</div>
<div class="t" style="left:420.5px;top:269.15px;font-size:14px;color:#1a1a1a;font-weight:400;letter-spacing:-0.17px">Rekha Arora</div>
<div class="t" style="left:594px;top:270.15px;font-size:14px;color:#1a1a1a;font-weight:400;">2022-11-25</div>
<div class="t" style="left:814px;top:270.15px;font-size:14px;color:#1a1a1a;font-weight:400;">R-1-3</div>
<div class="a" style="left:0px;top:298px;width:1000px;height:1px;background:#e3e3e3"></div>
<div class="a" style="left:24px;top:312px;width:16px;height:16px;border:2px solid #606060;border-radius:2px"></div>
<div class="t" style="left:64px;top:312.15px;font-size:14px;color:#1a1a1a;font-weight:400;letter-spacing:-0.14px">PHI ReviewExample</div>
<div class="t" style="left:264px;top:312.15px;font-size:14px;color:#1a1a1a;font-weight:400;">T1_post</div>
<div class="a" style="left:390px;top:307px;width:25px;height:25px;border-radius:50%;background:#1565dc;color:#fff;font-size:11px;font-weight:700;line-height:25px;text-align:center;letter-spacing:-0.2px">RA</div>
<div class="t" style="left:420.5px;top:311.15px;font-size:14px;color:#1a1a1a;font-weight:400;letter-spacing:-0.17px">Rekha Arora</div>
<div class="t" style="left:594px;top:312.15px;font-size:14px;color:#1a1a1a;font-weight:400;">2022-11-25</div>
<div class="t" style="left:814px;top:312.15px;font-size:14px;color:#1a1a1a;font-weight:400;">R-1-4</div>
<div class="a" style="left:0px;top:340px;width:1000px;height:1px;background:#e3e3e3"></div>
<div class="a" style="left:24px;top:354px;width:16px;height:16px;border:2px solid #606060;border-radius:2px"></div>
<div class="t" style="left:64px;top:354.15px;font-size:14px;color:#1a1a1a;font-weight:400;letter-spacing:-0.14px">PHI ReviewExample</div>
<div class="t" style="left:264px;top:354.15px;font-size:14px;color:#1a1a1a;font-weight:400;">T1_GAD</div>
<div class="a" style="left:390px;top:349px;width:25px;height:25px;border-radius:50%;background:#1565dc;color:#fff;font-size:11px;font-weight:700;line-height:25px;text-align:center;letter-spacing:-0.2px">RA</div>
<div class="t" style="left:420.5px;top:353.15px;font-size:14px;color:#1a1a1a;font-weight:400;letter-spacing:-0.17px">Rekha Arora</div>
<div class="t" style="left:594px;top:354.15px;font-size:14px;color:#1a1a1a;font-weight:400;">2022-11-25</div>
<div class="t" style="left:814px;top:354.15px;font-size:14px;color:#1a1a1a;font-weight:400;">R-1-5</div>
<div class="a" style="left:0px;top:382px;width:1000px;height:1px;background:#e3e3e3"></div>
<div class="a" style="left:24px;top:396px;width:16px;height:16px;border:2px solid #606060;border-radius:2px"></div>
<div class="t" style="left:64px;top:396.15px;font-size:14px;color:#1a1a1a;font-weight:400;letter-spacing:-0.14px">PHI ReviewExample</div>
<div class="t" style="left:264px;top:396.15px;font-size:14px;color:#1a1a1a;font-weight:400;">T1_Pre</div>
<div class="a" style="left:390px;top:391px;width:25px;height:25px;border-radius:50%;background:#1565dc;color:#fff;font-size:11px;font-weight:700;line-height:25px;text-align:center;letter-spacing:-0.2px">RA</div>
<div class="t" style="left:420.5px;top:395.15px;font-size:14px;color:#1a1a1a;font-weight:400;letter-spacing:-0.17px">Rekha Arora</div>
<div class="t" style="left:594px;top:396.15px;font-size:14px;color:#1a1a1a;font-weight:400;">2022-11-25</div>
<div class="t" style="left:814px;top:396.15px;font-size:14px;color:#1a1a1a;font-weight:400;">R-1-6</div>
<div class="a" style="left:0px;top:424px;width:1000px;height:1px;background:#e3e3e3"></div>
<div class="t" style="left:466px;top:439.15px;font-size:14px;color:#3b63a8;font-weight:400;">See full list</div>
<div class="a" style="left:0px;top:466px;width:1000px;height:1px;background:#e3e3e3"></div>
<div class="t" style="left:0px;top:489.04px;font-size:12px;color:#222;font-weight:400;left:auto;right:24.5px">0 tasks marked for creation</div>
<div class="a" style="left:628.5px;top:523.5px;width:69px;height:31px;border:1px solid #ccc;border-radius:4px"></div>
<div class="t" style="left:644.5px;top:533.04px;font-size:12px;color:#1a5fe0;font-weight:400;">Cancel</div>
<div class="a" style="left:708.5px;top:523.5px;width:124px;height:31px;border:1px solid #ccc;border-radius:4px"></div>
<div class="t" style="left:724px;top:533.04px;font-size:12px;color:#1a5fe0;font-weight:400;">Ignore Duplicates</div>
<div class="a" style="left:843px;top:524px;width:128px;height:30px;background:#e0e0e0;border-radius:4px"></div>
<div class="t" style="left:859.5px;top:533.04px;font-size:12px;color:#a3a3a3;font-weight:400;">Create Duplicates</div>
</div>
</body></html>
